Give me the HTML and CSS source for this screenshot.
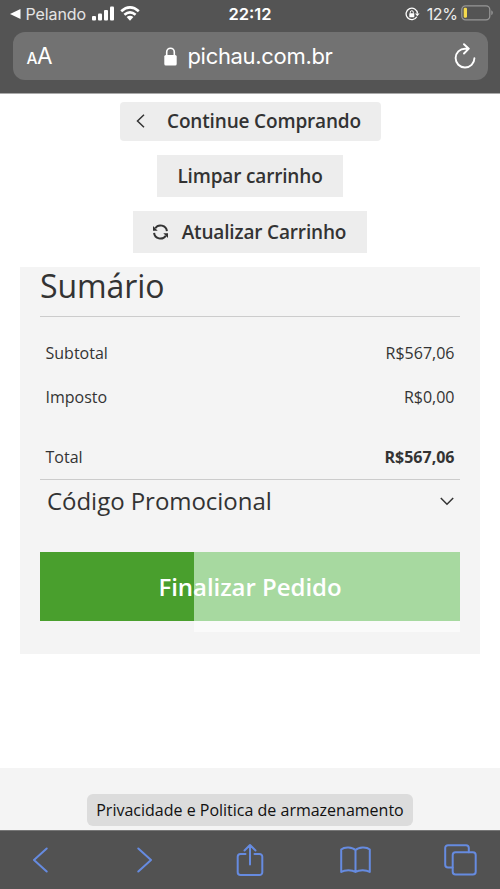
FILE: index.html
```html
<!DOCTYPE html>
<html lang="pt-BR">
<head>
<meta charset="utf-8">
<title>Carrinho</title>
<link rel="stylesheet" href="styles.css">
</head>
<body>
<header class="browser-top">
  <div class="status">
    <div class="status-left">
      <svg class="back-tri" width="11" height="10" viewBox="0 0 11 10"><path d="M0 5 10.500 0v10z" fill="#fff"/></svg>
      <span class="back-app">Pelando</span>
      <svg class="signal" width="23" height="15" viewBox="0 0 23 15" fill="#fff"><rect y="10" width="4" height="4.500" rx="1"/><rect x="6" y="7.500" width="4" height="7" rx="1"/><rect x="12" y="4" width="4" height="10.500" rx="1"/><rect x="18" y="0.500" width="4" height="14" rx="1"/></svg>
      <svg class="wifi" width="20" height="15" viewBox="0 0 20 15" fill="none" stroke="#fff" stroke-width="2.700"><path d="M1.200 5.200Q10-2.400 18.800 5.200M4.400 8.700Q10 4.100 15.600 8.700"/><path d="M6.600 11.100Q10 8.400 13.400 11.100L10 14.700z" fill="#fff" stroke="none"/></svg>
    </div>
    <span class="clock">22:12</span>
    <div class="status-right">
      <svg class="lock-rotation" width="15" height="14" viewBox="0 0 15 14" fill="none" stroke="#fff"><path d="M11.800 9.700A5.700 5.700 0 1 1 12.500 6.500" stroke-width="1.300"/><path d="M10 6.500h4.600L12.300 9.200z" fill="#fff" stroke="none"/><rect x="4.300" y="6.200" width="5" height="4" rx=".5" fill="#fff" stroke="none"/><path d="M5.300 6.500V5.200a1.500 1.500 0 0 1 3 0v1.300"/></svg>
      <span class="percent">12%</span>
      <svg class="battery" width="32" height="16" viewBox="0 0 32 16"><rect x=".8" y=".8" width="28" height="14" rx="3.800" fill="none" stroke="#969696" stroke-width="1.300"/><rect x="2.700" y="2.800" width="3.300" height="10" rx="1.200" fill="#f5d94c"/><path d="M30.300 5.300q1.500.6 1.500 2.500t-1.500 2.500z" fill="#969696"/></svg>
    </div>
  </div>
  <div class="address">
    <span class="aa"><span class="aa-small">A</span>A</span>
    <div class="site">
      <svg width="13" height="19" viewBox="0 0 13 19"><rect x=".3" y="8" width="12.400" height="10.500" rx="1.600" fill="#fff"/><path d="M2.700 8.500V5a3.800 3.800 0 0 1 7.600 0v3.500" fill="none" stroke="#fff" stroke-width="1.600"/></svg>
      <span class="domain">pichau.com.br</span>
    </div>
    <svg class="reload" width="22" height="26" viewBox="0 0 22 26" fill="none" stroke="#fff" stroke-width="1.900" stroke-linecap="round" stroke-linejoin="round"><path d="M13.500 5.700H11A9.400 9.400 0 1 0 20.400 15.200M10 1.200l4.800 4.500-4.800 4.800"/></svg>
  </div>
</header>
<main class="page">
  <div class="actions">
    <button class="btn btn-continue"><svg width="9" height="14" viewBox="0 0 9 14" fill="none" stroke="#333" stroke-width="1.500"><path d="M8 .7 1.500 7 8 13.300"/></svg><span>Continue Comprando</span></button>
    <button class="btn btn-clear"><span>Limpar carrinho</span></button>
    <button class="btn btn-update"><svg width="17" height="16" viewBox="0 0 17 16" fill="none" stroke="#333" stroke-width="2"><path d="M3.200 4.300A6.400 6.400 0 0 1 14.900 7.200M13.800 11.700A6.400 6.400 0 0 1 2.100 8.800"/><path d="M1 2v4.700h4.700zM16 14V9.300h-4.700z" fill="#333" stroke="none"/></svg><span>Atualizar Carrinho</span></button>
  </div>
  <section class="summary">
    <h1>Sumário</h1>
    <dl class="totals">
      <div class="row"><dt>Subtotal</dt><dd>R$567,06</dd></div>
      <div class="row"><dt>Imposto</dt><dd>R$0,00</dd></div>
      <div class="row grand"><dt>Total</dt><dd>R$567,06</dd></div>
    </dl>
    <div class="promo"><h2>Código Promocional</h2><svg width="14" height="9" viewBox="0 0 14 9" fill="none" stroke="#333" stroke-width="1.500"><path d="M.8 1 7 7.200 13.200 1"/></svg></div>
    <button class="checkout"><span>Finalizar Pedido</span></button>
  </section>
  <footer class="footer"><a class="privacy">Privacidade e Politica de armazenamento</a></footer>
</main>
<nav class="toolbar">
  <svg width="16" height="26" viewBox="0 0 16 26"><path d="M14.700 1.500 2 13l12.700 11.500"/></svg>
  <svg width="16" height="26" viewBox="0 0 16 26"><path d="M1.300 1.500 14 13 1.300 24.500"/></svg>
  <svg width="28" height="34" viewBox="0 0 28 34"><path d="M9.500 11H4.500A2.800 2.800 0 0 0 1.700 13.800v15.400A2.800 2.800 0 0 0 4.500 32h19a2.800 2.800 0 0 0 2.800-2.800V13.800a2.800 2.800 0 0 0-2.800-2.800H18.500M14 21.500V2M8.500 7.500 14 2 19.500 7.500"/></svg>
  <svg width="31" height="28" viewBox="0 0 31 28"><path d="M15.500 4.200C12.500.8 4.500.6 1.200 3.400V26c3.500-2.400 10.800-2.400 14.300 0 3.500-2.400 10.800-2.400 14.300 0V3.400C26.500.6 18.500.8 15.500 4.200V26"/></svg>
  <svg width="33" height="32" viewBox="0 0 33 32"><path d="M8.500 23.500H4A2.800 2.800 0 0 1 1.200 20.700V4A2.800 2.800 0 0 1 4 1.200h18A2.800 2.800 0 0 1 24.800 4v4.300"/><rect x="8.700" y="8.300" width="23" height="22.300" rx="2.800"/></svg>
</nav>
</body>
</html>
```

FILE: styles.css
```css
* { box-sizing: border-box; }
body { margin: 0; width: 500px; height: 889px; overflow: hidden; display: flex; flex-direction: column; background: #fff; color: #333; font-family: "Open Sans", sans-serif; }
svg { display: block; flex: none; }
h1, h2, dl, dd { margin: 0; font-weight: 400; }
button { border: 0; padding: 0; font: inherit; color: inherit; }

.browser-top { flex: none; height: 94px; background: #545454; border-bottom: 1px solid #aaa; color: #fff; font-family: Inter, sans-serif; padding: 0 12.5px; }
.status { height: 32px; padding-bottom: 4px; display: grid; grid-template-columns: 1fr auto 1fr; align-items: center; margin: 0 -5px 0 -3px; }
.status-left, .status-right { display: flex; align-items: center; }
.status-right { justify-content: flex-end; }
.back-app { font-size: 16px; margin-left: 5px; width: 60px; letter-spacing: -.1px; color: #e4e4e4; white-space: nowrap; }
.signal { margin-left: 6px; margin-top: -2px; }
.wifi { margin-left: 5px; margin-top: -2px; }
.clock { font-size: 16.5px; font-weight: 600; margin-right: 2px; }
.percent { font-size: 16px; margin: 0 3px 0 7px; letter-spacing: -.4px; color: #eee; }
.battery { margin-top: -2px; }

.address { height: 48px; border-radius: 12px; background: #727272; display: grid; grid-template-columns: 1fr auto 1fr; align-items: center; padding: 0 12px 0 14px; }
.aa { font-size: 22.5px; line-height: 24px; padding-top: 2px; white-space: nowrap; letter-spacing: -.5px; }
.aa-small { font-size: 15.5px; font-weight: 500; }
.site { display: flex; align-items: center; gap: 10px; margin-right: 5px; }
.domain { font-size: 22px; line-height: 28px; letter-spacing: -.32px; }
.reload { justify-self: end; }

.page { flex: 1; display: flex; flex-direction: column; }
.actions { display: flex; flex-direction: column; align-items: center; gap: 13.5px; padding-top: 7.500px; }
.btn { background: #ededed; height: 42.500px; display: flex; align-items: center; justify-content: center; font-size: 19px; font-weight: 580; letter-spacing: -.16px; white-space: nowrap; }
.btn-continue { width: 261px; height: 39.500px; border-radius: 4px; gap: 22px; padding: 0 3px 1px 0; }
.btn-clear { width: 186px; }
.btn-update { width: 234px; gap: 13px; padding-right: 2px; }

.summary { margin: 14px 20px 0; height: 387px; padding: 0 20px; background: #f4f4f4; }
h1 { height: 50px; border-bottom: 1px solid #ccc; font-size: 32px; line-height: 38px; letter-spacing: -.1px; }
.totals { height: 162.500px; padding: 14px 5.5px 0; border-bottom: 1px solid #ccc; font-size: 16px; }
.row { height: 44px; display: flex; justify-content: space-between; align-items: center; }
.grand { margin-top: 16px; }
.grand dd { font-weight: 700; }
.promo { height: 72.500px; padding: 0 6px 29px 7px; display: flex; align-items: center; justify-content: space-between; }
h2 { font-size: 24px; line-height: 32px; letter-spacing: -.04px; }
.checkout { position: relative; display: block; width: 420px; height: 69px; background: #499f2d; color: #fff; font-size: 24px; font-weight: 580; letter-spacing: -.04px; }
.checkout::after { content: ""; position: absolute; left: 153.5px; right: 0; top: 0; height: 80px; background: linear-gradient(#a7d9a0 0 69px, #fafafa 69px); z-index: 0; }
.checkout span { position: relative; z-index: 1; }

.footer { margin-top: auto; height: 62px; background: #f4f4f4; padding-top: 26px; display: flex; justify-content: center; align-items: flex-start; }
.privacy { width: 326px; height: 32px; border-radius: 6px; background: #dcdcdc; color: #111; font-size: 16px; line-height: 32px; text-align: center; white-space: nowrap; }

.toolbar { flex: none; height: 59px; background: #525252; border-top: 1px solid #777; display: grid; grid-template-columns: repeat(5, 105px); justify-content: center; justify-items: center; align-items: center; }
.toolbar path, .toolbar rect { fill: none; stroke: #668be0; stroke-width: 2; stroke-linecap: round; stroke-linejoin: round; }
```
